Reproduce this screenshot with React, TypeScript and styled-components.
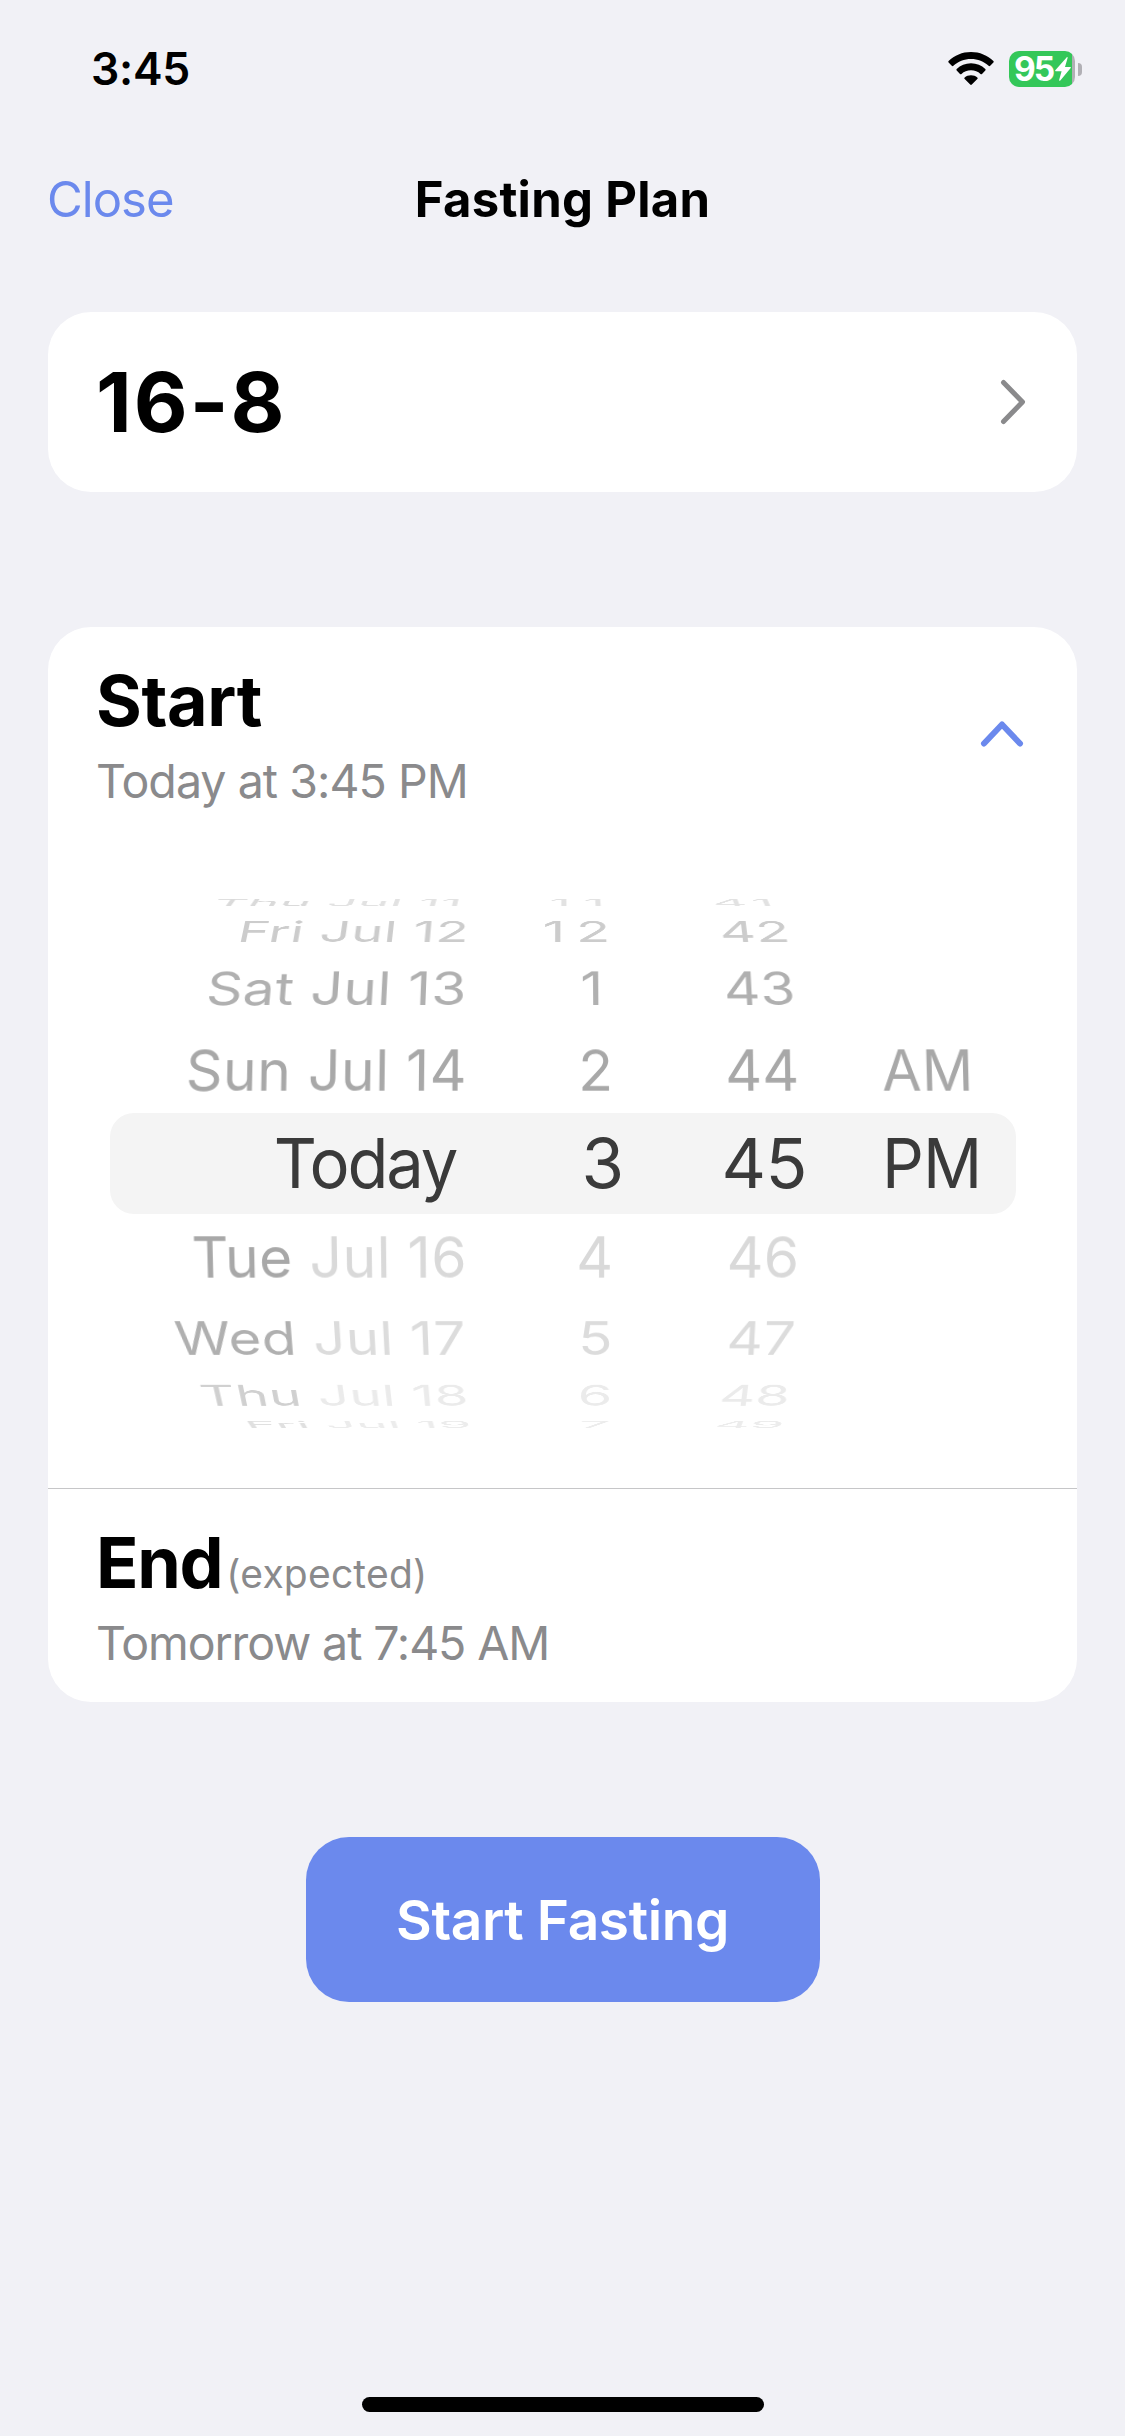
import React from "react";
import styled, { createGlobalStyle } from "styled-components";

const color = {
  page: "#f1f1f6",
  card: "#ffffff",
  ink: "#000000",
  muted: "#8a8a8c",
  accent: "#6b89ed",
  line: "#c6c6c8",
  battery: "#34c759",
  batteryRest: "#b1b0b5",
};

const GlobalStyle = createGlobalStyle`
  * { box-sizing: border-box; }
  body {
    margin: 0;
    background: ${color.page};
    font-family: Inter, "Liberation Sans", sans-serif;
    -webkit-font-smoothing: antialiased;
  }
`;

const Screen = styled.div`
  display: flex;
  flex-direction: column;
  width: 1125px;
  height: 2436px;
  background: ${color.page};
  color: ${color.ink};
  overflow: hidden;
`;

const StatusBar = styled.div`
  display: flex;
  align-items: center;
  justify-content: space-between;
  height: 138px;
  padding: 0 43px 0 91px;
`;

const Clock = styled.span`
  font-size: 44.5px;
  font-weight: 600;
  line-height: 60px;
  letter-spacing: -0.3px;
`;

const StatusIcons = styled.div`
  display: flex;
  align-items: center;
  gap: 15px;
`;

const Battery = styled.div`
  display: flex;
  align-items: center;
  gap: 3px;
`;

const BatteryBody = styled.div`
  display: flex;
  align-items: center;
  width: 66px;
  height: 36px;
  padding-left: 5px;
  border-radius: 10px;
  background: linear-gradient(to right, ${color.battery} 63px, ${color.batteryRest} 63px);
  color: #fff;
`;

const BatteryLevel = styled.span`
  width: 41px;
  font-size: 33.5px;
  font-weight: 700;
  line-height: 36px;
  letter-spacing: -2px;
`;

const BatteryTip = styled.div`
  width: 4px;
  height: 13px;
  border-radius: 0 6px 6px 0;
  background: ${color.batteryRest};
`;

const NavBar = styled.header`
  display: grid;
  grid-template-columns: 1fr auto 1fr;
  align-items: center;
  height: 123px;
  padding: 0 47px;
`;

const CloseButton = styled.button`
  justify-self: start;
  padding: 0;
  border: 0;
  background: none;
  color: ${color.accent};
  font: 400 49px/60px Inter, sans-serif;
  letter-spacing: -1px;
`;

const NavTitle = styled.h1`
  margin: 0;
  font-size: 49px;
  font-weight: 700;
  line-height: 60px;
  letter-spacing: 0.3px;
`;

const Content = styled.main`
  display: flex;
  flex-direction: column;
  padding: 51px 48px 0;
`;

const Card = styled.section`
  display: flex;
  flex-direction: column;
  border-radius: 43px;
  background: ${color.card};
  overflow: hidden;
`;

const PlanCard = styled(Card)`
  flex-direction: row;
  align-items: center;
  justify-content: space-between;
  height: 180px;
  margin-bottom: 135px;
  padding: 0 51px 0 48px;
`;

const PlanName = styled.h2`
  margin: 0;
  font-size: 83px;
  font-weight: 700;
  font-feature-settings: "calt" 0;
  line-height: 100px;
  letter-spacing: 2px;
`;

const StartHeader = styled.div`
  display: flex;
  align-items: center;
  justify-content: space-between;
  height: 213px;
  padding: 0 52px 0 48px;
`;

const TitleGroup = styled.div`
  display: flex;
  flex-direction: column;
  gap: 8px;
  padding-top: 2px;
`;

const SectionTitle = styled.h2<{ $tracking: number }>`
  margin: 0;
  font-size: 70px;
  font-weight: 700;
  line-height: 85px;
  letter-spacing: ${(p) => p.$tracking}px;
`;

const Detail = styled.p<{ $tracking: number }>`
  margin: 0;
  color: ${color.muted};
  font-size: 46.5px;
  line-height: 60px;
  letter-spacing: ${(p) => p.$tracking}px;
`;

const Wheel = styled.div`
  display: flex;
  flex-direction: column;
  height: 648px;
  padding: 52px 61px 53px 62px;
`;

const WheelRow = styled.div<{ $height: number; $angle: number; $selected?: boolean }>`
  display: grid;
  grid-template-columns: 357px 145px 187px 1fr;
  grid-template-rows: 100%;
  height: ${(p) => p.$height}px;
  align-items: center;
  border-radius: ${(p) => (p.$selected ? 24 : 0)}px;
  background: ${(p) => (p.$selected ? "#f4f4f4" : "none")};
  transform: ${(p) => (p.$angle ? `perspective(2600px) rotateX(${p.$angle}deg)` : "none")};
  font-size: ${(p) => (p.$selected ? 69 : 57)}px;
  white-space: nowrap;
`;

const WheelCell = styled.span<{
  $color: string;
  $shift?: number;
  $scale?: number;
  $start?: boolean;
  $tracking?: number;
}>`
  justify-self: ${(p) => (p.$start ? "start" : "end")};
  padding-left: ${(p) => (p.$start ? 83 : 0)}px;
  line-height: 1;
  color: ${(p) => p.$color};
  letter-spacing: ${(p) => p.$tracking ?? 0}px;
  transform: translateX(${(p) => p.$shift ?? 0}px) scaleX(${(p) => p.$scale ?? 1});
  transform-origin: ${(p) => (p.$start ? "83px 50%" : "100% 50%")};
`;

const MonthDay = styled.span<{ $color: string }>`
  color: ${(p) => p.$color};
`;

const EndSection = styled.div`
  display: flex;
  flex-direction: column;
  height: 214px;
  padding: 31px 48px 0;
  border-top: 1px solid ${color.line};
`;

const EndTitleLine = styled.div`
  display: flex;
  align-items: baseline;
  gap: 4px;
  height: 93px;
`;

const Expected = styled.span`
  color: ${color.muted};
  font-size: 39px;
  letter-spacing: 0.2px;
`;

const StartButton = styled.button`
  align-self: center;
  width: 514px;
  height: 165px;
  margin-top: 135px;
  padding: 0;
  border: 0;
  border-radius: 43px;
  background: ${color.accent};
  color: #fff;
  font: 600 55px/70px Inter, sans-serif;
  letter-spacing: -0.4px;
`;

const HomeIndicator = styled.div`
  align-self: center;
  width: 402px;
  height: 15px;
  margin: auto 0 24px;
  border-radius: 8px;
  background: ${color.ink};
`;

type Row = {
  day: string;
  date: string;
  hour: string;
  minute: string;
  period?: string;
  height: number;
  angle: number;
  /* Horizontal squeeze of the date and of the numbers. */
  scale: [number, number];
  dayColor: string;
  restColor: string;
  shifts: [number, number, number];
  hourTracking?: number;
  minuteTracking?: number;
};

const rowsAbove: Row[] = [
  { day: "Thu", date: "Jul 11", hour: "11", minute: "41", height: 21, angle: 80, scale: [0.93, 0.94], dayColor: "#dadada", restColor: "#e2e2e2", shifts: [-4, 5, -20], hourTracking: 13, minuteTracking: 6 },
  { day: "Fri", date: "Jul 12", hour: "12", minute: "42", height: 37, angle: 60, scale: [0.95, 0.98], dayColor: "#cccccc", restColor: "#cccccc", shifts: [2, 9, -9], hourTracking: 11 },
  { day: "Sat", date: "Jul 13", hour: "1", minute: "43", height: 77, angle: 37, scale: [0.99, 0.99], dayColor: "#b0b0b0", restColor: "#b0b0b0", shifts: [0, -9, -4] },
  { day: "Sun", date: "Jul 14", hour: "2", minute: "44", period: "AM", height: 86, angle: 10, scale: [1, 1], dayColor: "#a8a8a8", restColor: "#a8a8a8", shifts: [0, 1, 0] },
];

const rowsBelow: Row[] = [
  { day: "Tue", date: "Jul 16", hour: "4", minute: "46", height: 86, angle: -10, scale: [1, 1], dayColor: "#a8a8a8", restColor: "#d9d9d9", shifts: [0, 1, 0] },
  { day: "Wed", date: "Jul 17", hour: "5", minute: "47", height: 77, angle: -37, scale: [0.99, 0.99], dayColor: "#b0b0b0", restColor: "#dcdcdc", shifts: [-1, 1, -4] },
  { day: "Thu", date: "Jul 18", hour: "6", minute: "48", height: 37, angle: -60, scale: [0.96, 0.98], dayColor: "#d0d0d0", restColor: "#ebebeb", shifts: [2, 0, -9] },
  { day: "Fri", date: "Jul 19", hour: "7", minute: "49", height: 21, angle: -80, scale: [0.93, 0.96], dayColor: "#e0e0e0", restColor: "#ececec", shifts: [5, -2, -15] },
];

function renderRow(row: Row) {
  return (
    <WheelRow key={row.day + row.date} $height={row.height} $angle={row.angle}>
      <WheelCell $color={row.dayColor} $shift={row.shifts[0]} $scale={row.scale[0]} $tracking={0.5}>
        {row.day} <MonthDay $color={row.restColor}>{row.date}</MonthDay>
      </WheelCell>
      <WheelCell $color={row.restColor} $shift={row.shifts[1]} $scale={row.scale[1]} $tracking={row.hourTracking}>
        {row.hour}
      </WheelCell>
      <WheelCell $color={row.restColor} $shift={row.shifts[2]} $scale={row.scale[1]} $tracking={row.minuteTracking}>
        {row.minute}
      </WheelCell>
      {row.period && (
        <WheelCell $color={row.restColor} $start $tracking={0.5}>
          {row.period}
        </WheelCell>
      )}
    </WheelRow>
  );
}

function WifiIcon() {
  return (
    <svg width="46" height="34" viewBox="0 0 46 34" fill="#000">
      <path d="M23 0C14.300 0 6.400 3.400.600 9 .100 9.500.100 10.100.600 10.600L3.800 13.800C4.300 14.300 4.900 14.300 5.400 13.800 10 9.500 16.200 7 23 7S36 9.500 40.600 13.800C41.100 14.300 41.700 14.300 42.200 13.800L45.400 10.600C45.900 10.100 45.900 9.500 45.400 9 39.600 3.400 31.700 0 23 0Z" />
      <path d="M23 11.300C17.400 11.300 12.400 13.400 8.700 17 8.200 17.500 8.200 18.100 8.700 18.600L12 21.900C12.500 22.400 13 22.400 13.500 21.900 16 19.700 19.300 18.300 23 18.300S30 19.700 32.500 21.900C33 22.400 33.500 22.400 34 21.900L37.300 18.600C37.800 18.100 37.800 17.500 37.300 17 33.600 13.400 28.600 11.300 23 11.300Z" />
      <path d="M23 23.200C20.500 23.200 18.300 24.100 16.700 25.500 16.100 26 16.200 26.600 16.700 27.100L22.200 32.600C22.700 33.100 23.300 33.100 23.800 32.600L29.300 27.100C29.800 26.600 29.900 26 29.300 25.500 27.700 24.100 25.500 23.200 23 23.200Z" />
    </svg>
  );
}

function BoltIcon() {
  return (
    <svg width="16" height="24" viewBox="0 0 16 24" fill="#fff">
      <path d="M11.600.400 .300 13.200C-.100 13.700.100 14.200.700 14.200H6.600L4.200 22.800C3.900 23.800 4.700 24.100 5.300 23.400L15.700 10.900C16.100 10.400 15.900 9.900 15.300 9.900H10L12.600 1.100C12.900.200 12.200-.200 11.600.400Z" />
    </svg>
  );
}

export default function App() {
  return (
    <>
      <GlobalStyle />
      <Screen>
        <StatusBar>
          <Clock>3:45</Clock>
          <StatusIcons>
            <WifiIcon />
            <Battery>
              <BatteryBody>
                <BatteryLevel>95</BatteryLevel>
                <BoltIcon />
              </BatteryBody>
              <BatteryTip />
            </Battery>
          </StatusIcons>
        </StatusBar>

        <NavBar>
          <CloseButton>Close</CloseButton>
          <NavTitle>Fasting Plan</NavTitle>
        </NavBar>

        <Content>
          <PlanCard>
            <PlanName>16-8</PlanName>
            <svg width="27" height="46" viewBox="0 0 27 46" fill="none" stroke={color.muted} strokeWidth="5" strokeLinecap="round" strokeLinejoin="round">
              <path d="M4.500 3.500 23.500 23 4.500 42.500" />
            </svg>
          </PlanCard>

          <Card>
            <StartHeader>
              <TitleGroup>
                <SectionTitle $tracking={-0.4}>Start</SectionTitle>
                <Detail $tracking={-0.95}>Today at 3:45 PM</Detail>
              </TitleGroup>
              <svg width="46" height="28" viewBox="0 0 46 28" fill="none" stroke={color.accent} strokeWidth="6" strokeLinecap="round" strokeLinejoin="round">
                <path d="M5 23.500 23 4.500 41 23.500" />
              </svg>
            </StartHeader>

            <Wheel>
              {rowsAbove.map(renderRow)}
              <WheelRow $height={101} $angle={0} $selected>
                <WheelCell $color="#3a3a3a" $shift={-11} $tracking={-2.2} $scale={0.97}>Today</WheelCell>
                <WheelCell $color="#3a3a3a" $shift={12}>3</WheelCell>
                <WheelCell $color="#3a3a3a" $shift={8} $tracking={-0.5}>45</WheelCell>
                <WheelCell $color="#3a3a3a" $start $tracking={-1} $scale={0.95}>PM</WheelCell>
              </WheelRow>
              {rowsBelow.map(renderRow)}
            </Wheel>

            <EndSection>
              <EndTitleLine>
                <SectionTitle $tracking={-1.3}>End</SectionTitle>
                <Expected>(expected)</Expected>
              </EndTitleLine>
              <Detail $tracking={-1.1}>Tomorrow at 7:45 AM</Detail>
            </EndSection>
          </Card>

          <StartButton>Start Fasting</StartButton>
        </Content>

        <HomeIndicator />
      </Screen>
    </>
  );
}
